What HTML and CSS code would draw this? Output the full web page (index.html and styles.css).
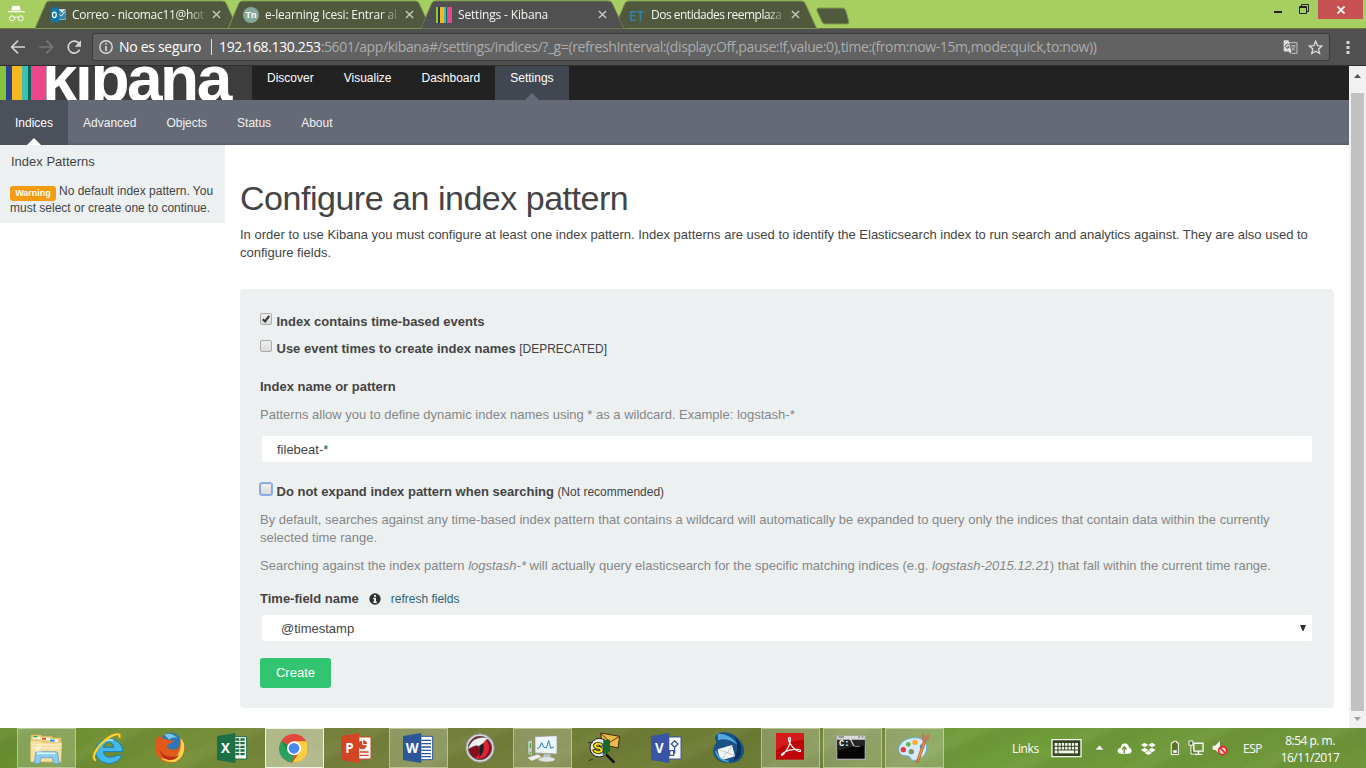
FILE: index.html
```html
<!DOCTYPE html>
<html lang="en">
<head>
<meta charset="utf-8">
<title>Settings - Kibana</title>
<link rel="stylesheet" href="styles.css">
</head>
<body>
<header class="tabstrip">
  <svg class="incognito" viewBox="20 10 60 60"><path d="M33 29l3-12q1-3 4-2l7 1 7-1q3-1 4 2l3 12zM23 31h50v4H23z" fill="#fff"/><g fill="none" stroke="#fff" stroke-width="3"><circle cx="35" cy="53" r="7.500"/><circle cx="61" cy="53" r="7.500"/><path d="M42 51q6-4 12 0"/></g></svg>
  <div class="tab">
    <svg class="shape" viewBox="0 0 207 29"><path d="M0 28.500L11 3Q12 1 15 1H187Q190 1 191 3L202 27Q203 28.500 205 28.500Z"/></svg>
    <svg class="fav" viewBox="148 20 51 51"><path d="M175 27h22v34h-22z" fill="#e8f1e8"/><path d="M176 29l10 9 10-9v31h-20z" fill="#3787ae"/><path d="M178 43l6 6 11-14" fill="none" stroke="#fff" stroke-width="3"/><path d="M150 24l27-4v50l-27-4z" fill="#1476a6"/><ellipse cx="162" cy="45" rx="6" ry="9" fill="none" stroke="#fff" stroke-width="4"/></svg>
    <span class="title t1">Correo - nicomac11@hot</span>
    <svg class="x" viewBox="0 0 10 10"><path d="M1 1l8 8M9 1L1 9"/></svg>
  </div>
  <div class="tab">
    <svg class="shape" viewBox="0 0 207 29"><path d="M0 28.500L11 3Q12 1 15 1H187Q190 1 191 3L202 27Q203 28.500 205 28.500Z"/></svg>
    <span class="fav moodle">Tn</span>
    <span class="title t2">e-learning Icesi: Entrar al</span>
    <svg class="x" viewBox="0 0 10 10"><path d="M1 1l8 8M9 1L1 9"/></svg>
  </div>
  <div class="tab active">
    <svg class="shape" viewBox="0 0 207 29"><path d="M0 28.500L11 3Q12 1 15 1H187Q190 1 191 3L202 27Q203 28.500 205 28.500Z"/></svg>
    <svg class="fav" viewBox="0 0 16 16"><path d="M0 0h2v16H0z" fill="#88ce26"/><path d="M2 0h2v16H2z" fill="#25376e"/><path d="M4 0h4v16H4z" fill="#f6b91b"/><path d="M8 0h2v16H8z" fill="#3ebeb0"/><path d="M10 0h1v16h-1z" fill="#12635c"/><path d="M11 0h5v16h-5z" fill="#e8478b"/></svg>
    <span class="title t3">Settings - Kibana</span>
    <svg class="x" viewBox="0 0 10 10"><path d="M1 1l8 8M9 1L1 9"/></svg>
  </div>
  <div class="tab">
    <svg class="shape" viewBox="0 0 207 29"><path d="M0 28.500L11 3Q12 1 15 1H187Q190 1 191 3L202 27Q203 28.500 205 28.500Z"/></svg>
    <span class="fav et">ET</span>
    <span class="title t4">Dos entidades reemplaza</span>
    <svg class="x" viewBox="0 0 10 10"><path d="M1 1l8 8M9 1L1 9"/></svg>
  </div>
  <svg class="newtab" viewBox="0 0 34 18"><path d="M2 1h25q2 0 3 3l3 11q0 2-2 2H9q-2 0-3-2L1 4q-1-2 1-3z" fill="#505a3c" stroke="#819f4d"/></svg>
  <div class="winbtns">
    <svg class="min" viewBox="0 0 8 2"><path d="M0 0h8v2H0z" fill="#222"/></svg>
    <svg class="max" viewBox="0 0 10 10"><path d="M2.500 2.500V.5h7v7h-2" fill="none" stroke="#222"/><path d="M.5 2.500h7v7h-7zM0 3.500h8" fill="none" stroke="#222"/></svg>
    <span class="close"><svg viewBox="0 0 8 8"><path d="M.5.5l7 7M7.500.5l-7 7" stroke="#fff" stroke-width="1.800"/></svg></span>
  </div>
</header>
<div class="toolbar">
  <svg class="navicons" viewBox="30 114 219 54"><g fill="none" stroke="#d6d6d6" stroke-width="5"><path d="M75 141H37M54 122L35 141l19 19"/><path d="M118 141h38M139 122l19 19-19 19" stroke="#777"/><path d="M238 132a18 18 0 1 0 1 17"/></g><path d="M243 121v19h-19z" fill="#d6d6d6"/></svg>
  <div class="omnibox">
    <svg class="info" viewBox="0 0 14 14"><circle cx="7" cy="7" r="6.200" fill="none" stroke="#ddd" stroke-width="1.400"/><path d="M6.200 3h1.600v1.600H6.200zM6.200 6h1.600v5H6.200z" fill="#ddd"/></svg>
    <span class="insecure">No es seguro</span><span class="sep"></span>
    <span class="url"><span class="host">192.168.130.253</span><span class="path">:5601/app/kibana#/settings/indices/?_g=(refreshInterval:(display:Off,pause:!f,value:0),time:(from:now-15m,mode:quick,to:now))</span></span>
    <svg class="translate" viewBox="850 119 46 46"><path d="M869 127h24v33h-17" fill="#656565" stroke="#c8c8c8" stroke-width="3"/><path d="M875 137h14M881 134v5M886 139q-3 8-10 12M878 142q4 6 9 9" fill="none" stroke="#d0d0d0" stroke-width="2.500"/><path d="M854 120h13l9 35-4 6-4-7h-14q-2 0-2-2v-30q0-2 2-2z" fill="#ddd"/><path d="M868 134a6 6 0 1 0 1 6h-6" fill="none" stroke="#555" stroke-width="3"/></svg>
    <svg class="star" viewBox="925 119 45 45"><path d="M948 123l5.500 13 13.500 1.200-10.300 9 3 13.300L948 152.500l-11.700 7 3-13.300-10.300-9 13.500-1.200z" fill="none" stroke="#ddd" stroke-width="4"/></svg>
  </div>
  <svg class="dots" viewBox="0 0 4 14"><path d="M.5 1h3v3h-3zM.5 6h3v3h-3zM.5 11h3v3h-3z" fill="#d6d6d6"/></svg>
</div>
<div class="viewport">
  <div class="page">
    <nav class="navbar">
      <div class="logo"><div class="bars"><i class="b1"></i><i class="b2"></i><i class="b3"></i><i class="b4"></i><i class="b5"></i><i class="b6"></i></div><span class="word">kibana</span></div>
      <a>Discover</a><a>Visualize</a><a>Dashboard</a><a class="on">Settings</a>
    </nav>
    <nav class="subnav"><a class="on">Indices</a><a>Advanced</a><a>Objects</a><a>Status</a><a>About</a></nav>
    <div class="columns">
      <aside class="sidebar">
        <div class="side-title">Index Patterns</div>
        <div class="side-msg"><span class="badge">Warning</span><span>No default index pattern. You</span></div>
        <div class="side-msg">must select or create one to continue.</div>
      </aside>
      <main class="main">
        <h1>Configure an index pattern</h1>
        <p class="intro">In order to use Kibana you must configure at least one index pattern. Index patterns are used to identify the Elasticsearch index to run search and analytics against. They are also used to configure fields.</p>
        <form class="well">
          <label class="check"><span class="box"><svg viewBox="0 0 11 11"><path d="M2 5.700l2.500 2.500L9 2" fill="none" stroke="#333" stroke-width="2.300"/></svg></span><b>Index contains time-based events</b></label>
          <label class="check second"><span class="box"></span><b>Use event times to create index names</b><small>[DEPRECATED]</small></label>
          <div class="field-title"><b>Index name or pattern</b></div>
          <p class="help">Patterns allow you to define dynamic index names using * as a wildcard. Example: logstash-*</p>
          <div class="input">filebeat-*</div>
          <label class="check third"><span class="box focus"></span><b>Do not expand index pattern when searching</b><small>(Not recommended)</small></label>
          <p class="help">By default, searches against any time-based index pattern that contains a wildcard will automatically be expanded to query only the indices that contain data within the currently<br>selected time range.</p>
          <p class="help">Searching against the index pattern <i>logstash-*</i> will actually query elasticsearch for the specific matching indices (e.g. <i>logstash-2015.12.21</i>) that fall within the current time range.</p>
          <div class="time-title"><b>Time-field name</b><svg viewBox="0 0 12 12"><circle cx="6" cy="6" r="5.700" fill="#333"/><path d="M5 2h2v1.800H5zM4.300 4.800H7v3.700h.8V10H4.300V8.500H5V6.200h-.7z" fill="#ecf0f1"/></svg><a>refresh fields</a></div>
          <div class="input select">@timestamp<svg viewBox="0 0 6 6"><path d="M0 0h6L3.500 6h-1z" fill="#333"/></svg></div>
          <span class="create">Create</span>
        </form>
      </main>
    </div>
  </div>
  <div class="scrollbar"><svg viewBox="0 0 7 4"><path d="M0 4L3.500 0 7 4z" fill="#505050"/></svg><div class="thumb"></div><svg viewBox="0 0 7 4"><path d="M0 0h7L3.500 4z" fill="#a0a0a0"/></svg></div>
</div>
<footer class="taskbar">
  <div class="apps">
    <svg class="slot open" viewBox="51 12 177 120"><path d="M92 36l3-4h28l3 5h30l3 4h25v74H92z" fill="#e5c46c"/><path d="M98 38h24v8H98zM123 41h27v8h-27zM148 46h27v8h-27z" fill="#fffbe8"/><path d="M100 36h12v4h-12z" fill="#2ba84a"/><path d="M126 42h12v5h-12z" fill="#d84028"/><path d="M150 47h14v6h-14z" fill="#2c8bd8"/><path d="M92 50l30 1 4 5h60l-4 56H92z" fill="#f6dfa0"/><path d="M96 62h84M98 72h80" stroke="#fdf0c5" stroke-width="4"/><path d="M103 119l4-32q1-4 6-4h54q5 0 6 4l5 32h-17l-4-18h-34l-4 18z" fill="#8bcbed" stroke="#4b98c9" stroke-width="2"/><path d="M112 88h54" stroke="#d9f3ff" stroke-width="5"/><path d="M124 66l-19 18M105 68l21 20M114 60v32" stroke="#fff" stroke-width="2"/></svg>
    <svg class="slot" viewBox="51 12 177 120"><g transform="translate(-186 0)"><path d="M350 94h16a41 37 0 1 1 1-22v11h-57q3 17 20 17 13 0 20-6zM310 70h31q-2-15-15-15-12 0-16 15z" fill="#44b9e9" stroke="#187eb7" stroke-width="3" fill-rule="evenodd"/><path d="M308 56q13-13 31-7" stroke="#b4eaff" stroke-width="5" fill="none"/><path d="M288 109q-16-5 3-34 22-32 51-43 22-7 17 10" fill="none" stroke="#d3a70b" stroke-width="8"/><path d="M288 109q-14-6 4-35 23-31 50-41 20-6 16 8" fill="none" stroke="#ffdf4c" stroke-width="4"/></g></svg>
    <svg class="slot" viewBox="423 12 177 120"><circle cx="510" cy="73" r="44" fill="#e3601b"/><circle cx="512" cy="58" r="32" fill="#2d76b8"/><path d="M493 32q21-9 39 10-17-4-24 5-9-9-15-15z" fill="#75c7e7"/><path d="M467 69q-3-25 12-37l4 13q9-6 21 3 8 2 15-1 0 10-13 13l-6 9q10 12 29 6 13-6 11-26 18 27 0 49-22 20-51 8-20-9-22-37z" fill="#df591b"/><path d="M552 59q5 40-27 54-25 5-43-12 32 13 51-10 13-16 8-50 7 8 11 18z" fill="#fbd44b"/><path d="M478 75q9 23 36 24 15 0 23-10-5 20-31 19-23-5-28-33z" fill="#bd2c13"/></svg>
    <svg class="slot" viewBox="609 12 177 120"><path d="M699 38h41v67h-41z" fill="#fff" stroke="#1d7044" stroke-width="3"/><path d="M706 43h12v7h-12zm15 0h13v7h-13zM706 54h12v7h-12zm15 0h13v7h-13zM706 65h12v7h-12zm15 0h13v7h-13zM706 76h12v7h-12zm15 0h13v7h-13zM706 87h12v7h-12zm15 0h13v7h-13z" fill="#1d7044"/><path d="M651 36l55-9v90l-55-9z" fill="#1d7044"/><text x="663" y="87" class="glyph">X</text></svg>
    <svg class="slot open current" viewBox="795 12 177 120"><circle cx="881" cy="73" r="43" fill="#e1473b"/><path d="M881 73L844 51Q825 91 861 112L877 116z" fill="#2ba15d"/><path d="M881 52h38Q934 95 897 114L877 116 900 82z" fill="#fdce42"/><path d="M844 51l20 32-1-18z" fill="#25834a"/><circle cx="882" cy="73" r="21" fill="#fff"/><circle cx="882" cy="73" r="16" fill="#4989ed"/></svg>
    <svg class="slot" viewBox="-9 12 177 120"><path d="M82 39h41v66H82z" fill="#fff" stroke="#d24625" stroke-width="3"/><circle cx="97" cy="63" r="13" fill="#d24625"/><path d="M98 47v15h15q-1-15-15-15" fill="#d24625" stroke="#fff" stroke-width="3"/><path d="M90 84h26M90 94h26" stroke="#d24625" stroke-width="4"/><path d="M33 36l55-9v90l-55-9z" fill="#d24625"/><text x="46" y="87" class="glyph">P</text></svg>
    <svg class="slot open" viewBox="177 12 177 120"><path d="M268 37h40v70h-40z" fill="#fff" stroke="#2b579a" stroke-width="3"/><path d="M274 49h29M274 59h29M274 69h29M274 79h29M274 89h29M274 98h29" stroke="#2b579a" stroke-width="4"/><path d="M219 36l55-9v90l-55-9z" fill="#2b579a"/><text x="227" y="87" class="glyph">W</text></svg>
    <svg class="slot" viewBox="363 12 177 120"><circle cx="450" cy="72" r="43" fill="#d7d7d9" stroke="#898989" stroke-width="3"/><circle cx="450" cy="72" r="35" fill="#85101d" stroke="#555" stroke-width="3"/><path d="M463 42q27 26 4 54-16 12-32 5 18-8 18-32z" fill="#df2438"/><path d="M413 76q10-26 25-31 14-8 40-2-12 3-18 14-5 12-10 19-2-13-14-11-8 2-23 11z" fill="#f1f1f1" stroke="#666"/><path d="M447 66q5 15-1 36 20-16 14-45z" fill="#232023"/></svg>
    <svg class="slot open" viewBox="549 12 177 120"><path d="M594 52l12-3v46l-12-5z" fill="#ccd2d0" stroke="#777"/><path d="M601 58v14M601 83v6" stroke="#42b928" stroke-width="4"/><path d="M615 38l66-3v55l-66-3z" fill="#eff1f2" stroke="#909899" stroke-width="2"/><path d="M621 44l54-3v42l-54-2z" fill="#eaf8ff"/><path d="M621 73l8-3 6-14 6 13 8 3 7-22 6 23 10-4" fill="none" stroke="#2b7fa7" stroke-width="3"/><path d="M642 90h18l3 13h-25z" fill="#b9c2c5"/><ellipse cx="650" cy="106" rx="25" ry="7" fill="#dfe4e5"/><path d="M592 101l31-10 13 7-31 13z" fill="#f1f2ef" stroke="#888"/></svg>
    <svg class="slot" viewBox="735 12 177 120"><path d="M812 27l57 10-5 35-48-11z" fill="#f0b94c" stroke="#3c2b0b" stroke-width="3"/><path d="M813 29l28 25 26-16" fill="none" stroke="#5c3b08" stroke-width="3"/><path d="M829 92l24 24" stroke="#151515" stroke-width="8"/><circle cx="808" cy="71" r="28" fill="#dfe6e4" stroke="#202020" stroke-width="3"/><path d="M820 47h20v35l-22 12z" fill="#176b28"/><text x="789" y="88" class="searchS">S</text><path d="M774 56h14M776 110l13-5" stroke="#333" stroke-width="3"/></svg>
    <svg class="slot" viewBox="-9 12 177 120"><path d="M82 39h41v66H82z" fill="#fff" stroke="#3955a3" stroke-width="3"/><path d="M104 50l10 10-10 10-10-10zM89 80h12v14H89zM104 70v17h-3" fill="none" stroke="#3955a3" stroke-width="4"/><path d="M33 36l55-9v90l-55-9z" fill="#3955a3"/><text x="45" y="87" class="glyph">V</text></svg>
    <svg class="slot" viewBox="177 12 177 120"><path d="M230 54q-12-16 5-27 30-7 51 9 31 24 26 52-9 31-45 29-36 1-47-28-3-18 10-35z" fill="#195386"/><path d="M233 29q38-2 63 37-32-28-62-17z" fill="#57a7df"/><path d="M285 37q24 24 18 54-9 16-24 20 22-35 6-74z" fill="#0d315a"/><path d="M233 76l43-13 9 34-40 12q-10-13-12-33z" fill="#f4f6f6"/><path d="M235 77l28 9 13-22M247 106l12-21 26 10" fill="none" stroke="#adb3b6" stroke-width="2"/><path d="M227 81q7 28 39 32" fill="none" stroke="#4da5df" stroke-width="5"/></svg>
    <svg class="slot open" viewBox="363 12 177 120"><path d="M408 27h84v80h-84z" fill="#bf0509"/><path d="M408 27h84v20q-40 0-84 32z" fill="#e12724" opacity=".65"/><path d="M446 41q5-3 5 6-1 17-13 34-8 13-13 13-3-3 9-10 13-7 30-8 17-1 18 4-3 6-14-2-14-10-20-23-4-11-2-14z" fill="none" stroke="#fff" stroke-width="3.500"/></svg>
    <svg class="slot open" viewBox="549 12 177 120"><path d="M589 34h88v74h-88z" fill="#aaa"/><path d="M592 48h82v56h-82z" fill="#050505"/><path d="M592 36h82v9h-82z" fill="#d8d8d8"/><path d="M592 48h82v17q-44 0-82 16z" fill="#252525"/><path d="M596 39h16M655 39h5M665 39h5" stroke="#555" stroke-width="3"/><text x="597" y="67" class="cmd">C:\_</text></svg>
    <svg class="slot open" viewBox="735 12 177 120"><path d="M777 68q9-23 42-27 34-2 41 24 3 31-27 42-17 6-21-3-2-8-10-8-23 0-26-16-1-6 1-12z" fill="#d7eafa" stroke="#63a9d5" stroke-width="3"/><circle cx="790" cy="77" r="8" fill="#df3f3c"/><circle cx="805" cy="61" r="7" fill="#63b649"/><circle cx="825" cy="55" r="8" fill="#ffa62b"/><circle cx="846" cy="68" r="7" fill="#4a95da"/><circle cx="814" cy="83" r="8" fill="#789469"/><path d="M829 115l20-62 7 3-20 58z" fill="#ed963d" stroke="#9f4e17" stroke-width="2"/><path d="M848 52q-6-15 0-24l8 8 10-7q6 13-8 27z" fill="#b97e5a"/></svg>
  </div>
  <div class="tray">
    <span class="links">Links</span>
    <svg class="keyboard" viewBox="273 117 93 57"><path d="M276 119h87v51h-87z" fill="#34451f" stroke="#f4f8ec" stroke-width="4"/><path d="M284 129h70v31h-70z" fill="#f4f8ec"/><path d="M283 139h72M283 150h72M294 128v32M304 128v22M314 128v22M324 128v22M334 128v22M344 128v32" stroke="#34451f" stroke-width="3"/></svg>
    <svg class="up" viewBox="0 0 9 6"><path d="M0 5L4.500 0 9 5z" fill="#fff" stroke="#52682f" stroke-width=".5"/></svg>
    <svg class="cloud" viewBox="470 125 45 38"><path d="M481 160q-10-1-9-10 1-7 9-8 2-14 14-13 9 1 11 12 8 2 8 10-1 9-10 9z" fill="#fff"/><path d="M492 158v-17M485 147l7-8 7 8" fill="none" stroke="#71923f" stroke-width="4"/></svg>
    <svg class="dropbox" viewBox="541 127 45 39"><path d="M552 129l11 7-11 7-11-7zM574 129l11 7-11 7-11-7zM552 144l11 7-11 7-11-7zM574 144l11 7-11 7-11-7zM563 153l11 7-11 6-11-6z" fill="#fff"/></svg>
    <svg class="battery" viewBox="630 124 31 48"><path d="M634 132h6v-5h10v5h6v36h-22z" fill="#587329" stroke="#fff" stroke-width="3"/><path d="M640 155h11v8h-11z" fill="#fff"/></svg>
    <svg class="network" viewBox="684 123 49 47"><path d="M702 132h28v24h-28zM716 157v7M704 166h24" fill="none" stroke="#fff" stroke-width="4"/><path d="M687 125h12v13h-12zM693 138v27h9" fill="#516926" stroke="#fff" stroke-width="3"/></svg>
    <svg class="speaker" viewBox="757 124 48 48"><path d="M759 141h7l15-14v39l-15-13h-7z" fill="#f4f7ef"/><circle cx="789" cy="156" r="12" fill="#f8d0cb" stroke="#df2427" stroke-width="5"/><path d="M782 148l14 15" stroke="#df2427" stroke-width="5"/></svg>
    <span class="esp">ESP</span>
    <span class="clock"><span>8:54 p. m.</span><span>16/11/2017</span></span>
  </div>
</footer>
</body>
</html>
```
FILE: styles.css
```css
* { box-sizing: border-box; }
body { margin: 0; width: 1366px; height: 768px; overflow: hidden; display: flex; flex-direction: column; background: #fff; font-family: "Liberation Sans", Arial, sans-serif; }
svg { display: block; flex: none; }

.tabstrip { height: 29px; flex: none; background: #a6ce61; border-bottom: 1px solid #65793f; display: flex; font: 12px "Open Sans", "Noto Sans", sans-serif; color: #f5f5ef; }
.incognito { width: 20px; height: 20px; margin: 4px 8px 0 7px; }
.tab { position: relative; width: 193px; height: 29px; flex: none; display: flex; align-items: center; padding-left: 15px; }
.tab .shape { position: absolute; left: 0; top: 0; width: 207px; height: 29px; fill: #50593d; stroke: #7d9550; stroke-width: 1; }
.tab.active { z-index: 2; }
.tab.active .shape { fill: #505050; stroke: #68784c; }
.tab > :not(.shape) { position: relative; }
.fav { width: 16px; height: 16px; flex: none; }
.title { width: 134px; margin-left: 6px; white-space: nowrap; line-height: 20px; -webkit-mask-image: linear-gradient(90deg, #000 116px, rgba(0,0,0,.15) 133px); }
.t1 { letter-spacing: -.32px; }
.t2 { letter-spacing: -.22px; }
.t3 { letter-spacing: -.17px; }
.t4 { letter-spacing: -.5px; }
.x { width: 9px; height: 9px; margin-left: 6px; }
.x path { stroke: #c5c8bd; stroke-width: 1.6; }
.moodle { border-radius: 50%; background: #86a99f; color: #fff; font: bold 9px/16px "Liberation Sans", sans-serif; text-align: center; }
.et { color: #2f81a6; font: 600 14px/17px "Open Sans", sans-serif; }
.newtab { width: 34px; height: 18px; margin: 7px 0 0 9px; }
.winbtns { flex: 1; display: flex; justify-content: flex-end; margin-right: 3px; }
.min { width: 8px; height: 2px; margin: 11px 17px 0 0; }
.max { width: 10px; height: 10px; margin: 4px 9px 0 0; }
.close { width: 45px; height: 19px; background: #c75050; display: flex; align-items: center; justify-content: center; }
.close svg { width: 8px; height: 8px; }

.toolbar { height: 37px; flex: none; display: flex; padding: 4px 0 5px 10px; background: #505050; border-bottom: 1px solid #2e2e2e; align-items: flex-start; }
.navicons { width: 73px; height: 18px; margin: 5px 9px 0 0; }
.omnibox { width: 1238px; height: 28px; flex: none; background: #626262; border: 1px solid #3b3b3b; border-radius: 3px; display: flex; align-items: center; padding-left: 6px; font: 14px/18px "Open Sans", "Noto Sans", sans-serif; white-space: nowrap; color: #fff; }
.info { width: 14px; height: 14px; }
.insecure { width: 82px; margin-left: 6px; letter-spacing: -.3px; }
.sep { width: 1px; height: 16px; background: #ddd; margin: 0 7px 0 10px; }
.url { width: 1064px; }
.host { letter-spacing: -.36px; }
.path { color: #acacac; letter-spacing: -.393px; }
.translate, .star { width: 15px; height: 15px; }
.star { margin-left: 10px; }
.dots { width: 4px; height: 14px; margin: 7px 0 0 16px; }

.viewport { height: 662px; flex: none; display: flex; }
.page { width: 1349px; }
.scrollbar { width: 17px; background: #f1f1f1; padding: 8px 2px 7px; display: flex; flex-direction: column; align-items: center; }
.scrollbar svg { width: 7px; height: 4px; }
.thumb { width: 13px; height: 618px; background: #c1c1c1; margin: 15px 0 6px; }
.navbar { height: 34px; background: #222; display: flex; color: #fff; font-size: 12px; }
.navbar a { padding: 3px 15px 0; line-height: 18px; }
.navbar .on { position: relative; background: #414750; }
.navbar .on::after, .subnav .on::after { content: ""; position: absolute; left: 50%; bottom: 0; margin-left: -7px; border: 7px solid transparent; border-top: 0; border-bottom-color: #666a76; }
.logo { width: 252px; overflow: hidden; display: flex; background: #3d3d3d; }
.bars { display: flex; width: 46px; flex: none; }
.b1 { width: 6px; background: #86c440; }
.b2 { width: 6px; background: #2d438a; }
.b3 { width: 10px; background: #f3b91d; }
.b4 { width: 6px; background: #3fc0b1; }
.b5 { width: 3px; background: #09695d; }
.b6 { width: 15px; background: #ec478c; }
.word { font-size: 64px; line-height: 64px; font-weight: bold; letter-spacing: -2.500px; margin: -19px 0 0 -4px; height: 64px; }
.subnav { height: 45px; background: linear-gradient(#666a76 42px, #5a5d68); display: flex; color: #f0f1f2; font-size: 12px; }
.subnav a { padding: 13px 15px 0; line-height: 20px; }
.subnav .on { position: relative; background: #4b505b; color: #fff; }
.subnav .on::after { border-bottom-color: #fff; }
.columns { display: flex; align-items: flex-start; }
.sidebar { width: 225px; height: 78px; background: #ecf0f1; color: #444; padding: 8px 10px 0; white-space: nowrap; }
.side-title { font-size: 13px; line-height: 18px; padding-left: 1px; margin-bottom: 12px; }
.side-msg { display: flex; height: 17px; font-size: 12px; line-height: 17px; }
.badge { width: 46px; height: 15px; margin: 3px 3px 0 0; border-radius: 3px; background: #f39c12; color: #fff; font-size: 9px; line-height: 15px; font-weight: bold; text-align: center; }
.main { width: 1124px; padding: 35px 15px 0; font-size: 13px; line-height: 18px; color: #444; }
h1 { margin: 0 0 9px; font-size: 34px; line-height: 37px; font-weight: normal; letter-spacing: -.48px; color: #444; }
p { margin: 0; }
.well { width: 1094px; height: 419px; margin-top: 27px; padding: 24px 20px 0; background: #ecf0f1; border-radius: 4px; white-space: nowrap; }
.check { display: flex; height: 18px; }
.box { width: 12px; height: 12px; margin: 0 4.500px 0 0; border: 1px solid #aaa; border-radius: 2px; background: linear-gradient(#eee, #dcdcdc); flex: none; }
.box svg { width: 10px; height: 10px; }
.focus { box-shadow: 0 0 0 1px #87aef0; border-color: #8ba5d3; }
.check small { font-size: 12px; margin-left: 3.500px; }
.second { margin-top: 9px; }
.field-title { margin: 20px 0 10px; }
.help { color: #868788; margin-bottom: 10px; }
.input { width: 1050px; height: 26px; margin: 12px 0 0 2px; padding: 0 15px; line-height: 27px; background: #fff; border-radius: 2px; }
.third { margin: 21px 0 10px; }
.time-title { display: flex; align-items: center; margin-top: 15px; height: 18px; }
.time-title svg { width: 12px; height: 12px; margin: 0 10px; }
.time-title a { color: #2f6578; font-size: 12px; }
.select { margin-top: 7px; padding: 0 6px 0 19px; display: flex; justify-content: space-between; align-items: center; }
.select svg { width: 6px; height: 6px; }
.create { display: block; width: 71px; height: 30px; margin-top: 17px; border-radius: 3px; background: #31c471; color: #fff; line-height: 29px; text-align: center; }

.taskbar { height: 40px; flex: none; display: flex; justify-content: space-between; background: repeating-linear-gradient(155deg, rgba(255,255,255,.03) 0 9px, rgba(0,0,0,.03) 16px 27px, transparent 38px 51px), linear-gradient(90deg, #68902f, #759038 180px, #77813d 320px, #6d7c34 750px, #799044 900px, #6f9c39 960px, #6e9539); color: #fff; font: 12px "Open Sans", "Noto Sans", sans-serif; }
.apps { display: flex; gap: 3px; padding-left: 17px; }
.slot { width: 59px; height: 40px; }
.open { background: linear-gradient(rgba(255,255,255,.22), rgba(255,255,255,.17)); box-shadow: inset 0 0 0 1px rgba(226,235,197,.5); }
.current { background: rgba(235,240,218,.5); box-shadow: inset 0 0 0 1px #f0f4e5; }
.glyph { font: bold 40px "Open Sans", sans-serif; fill: #fff; }
.searchS { font: bold 46px "Liberation Sans", sans-serif; fill: #ffe600; stroke: #111; stroke-width: 5px; paint-order: stroke; }
.cmd { font: bold 26px "Liberation Mono", monospace; fill: #fff; }
.tray { width: 354px; display: flex; align-items: center; white-space: nowrap; }
.links { width: 27px; letter-spacing: -.35px; }
.keyboard { width: 31px; height: 19px; margin-left: 12px; }
.up { width: 9px; height: 6px; margin-left: 13px; }
.cloud { width: 15px; height: 13px; margin-left: 13px; }
.dropbox { width: 15px; height: 13px; margin-left: 9px; }
.battery { width: 10px; height: 16px; margin-left: 14px; }
.network { width: 16px; height: 16px; margin-left: 8px; }
.speaker { width: 16px; height: 16px; margin-left: 8px; }
.esp { width: 20px; margin-left: 15px; letter-spacing: -.5px; }
.clock { display: flex; flex-direction: column; align-items: center; width: 60px; line-height: 17px; margin: 1px 0 0 17px; letter-spacing: -.5px; }
```
